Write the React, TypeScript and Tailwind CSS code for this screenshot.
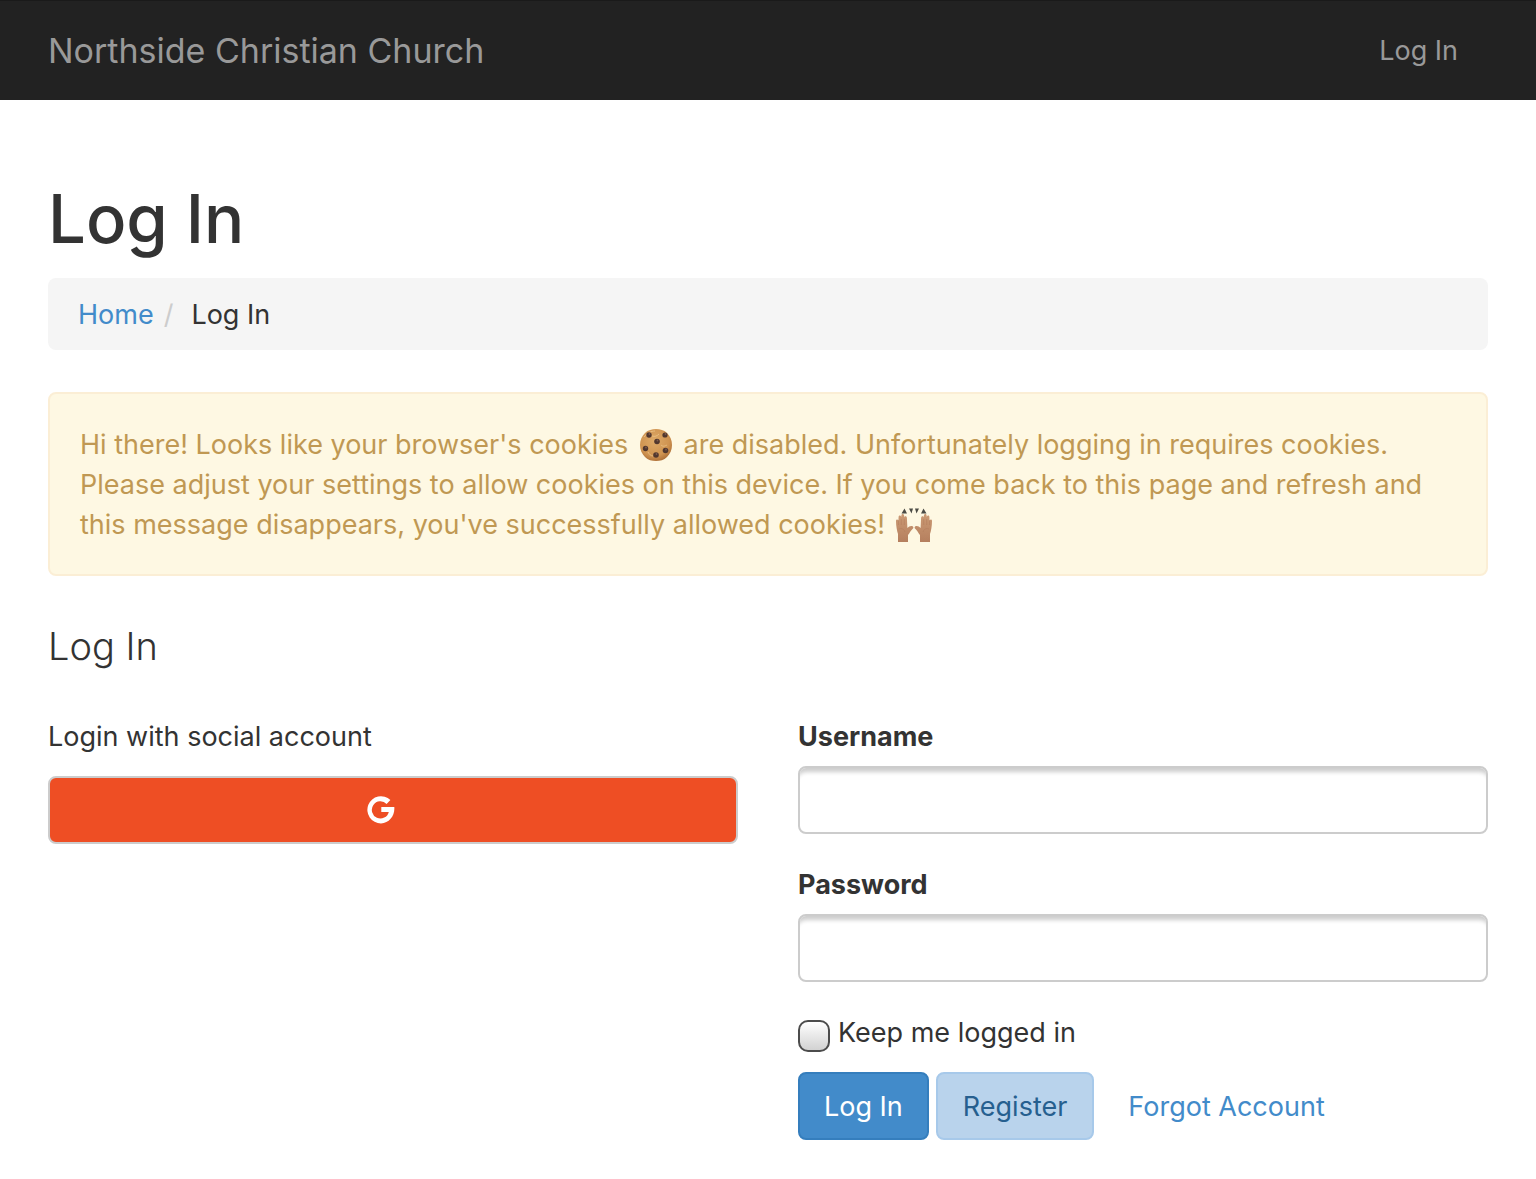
import { useState } from "react";

const CookieIcon = () => (
  <svg viewBox="0 0 34 34" className="inline-block size-[34px] align-[-8px] mx-[3px]" role="img" aria-label="cookie">
    <defs>
      <radialGradient id="dough" cx="45%" cy="38%" r="62%">
        <stop offset="0" stopColor="#deaa68" />
        <stop offset="0.75" stopColor="#cf9350" />
        <stop offset="1" stopColor="#b1733a" />
      </radialGradient>
    </defs>
    <path
      d="M17 1c4 0 8 1 11 4 3 3 5 7 5 12 0 5-2 9-5 12-3 3-7 4-11 4s-8-1-11-4c-3-3-5-7-5-12 0-5 2-9 5-12 3-3 7-4 11-4z"
      fill="url(#dough)"
    />
    <path d="M5 9c3-4 7-6 11-6M13 8c3 1 5 0 7-2M9 24c1 2 3 4 5 4M22 17c2 2 4 1 6 0" stroke="#e9bd80" strokeWidth="1" fill="none" />
    <g fill="#51372e">
      <circle cx="10" cy="7" r="2.7" />
      <circle cx="26" cy="7" r="2.6" />
      <circle cx="18" cy="13.5" r="2.8" />
      <circle cx="6.5" cy="20.5" r="2.7" />
      <circle cx="26.5" cy="22.5" r="2.8" />
      <circle cx="17" cy="27" r="2.8" />
    </g>
    <g fill="#7d5a4c">
      <circle cx="10.5" cy="6" r="0.9" />
      <circle cx="26.5" cy="6" r="0.9" />
      <circle cx="18.5" cy="12.5" r="0.9" />
      <circle cx="7" cy="19.5" r="0.9" />
      <circle cx="27" cy="21.5" r="0.9" />
      <circle cx="17.5" cy="26" r="0.9" />
    </g>
  </svg>
);

const HandsIcon = () => (
  <svg viewBox="0 0 36 36" className="ml-[3px] inline-block size-9 align-[-9px]" role="img" aria-label="raising hands">
    <defs>
      <linearGradient id="skin" x1="0" y1="0" x2="0" y2="1">
        <stop offset="0" stopColor="#cb9a74" />
        <stop offset="1" stopColor="#b57f5e" />
      </linearGradient>
      <g id="hand">
        <path
          d="M2 35V27C1 24 0 19 0 14c0-2 2-2 2.4 0L2.6 10c0-2 2.3-2 2.6 0l.2-1.500c0-2 2.500-2 2.700 0l.3 2c.2-2 2.500-1.500 2.500.5l.5 10c1.500-2 4-2.500 5.500-1.600 1 .8.4 1.900-.4 2.600-2 1.600-3 4.500-4.500 6V35z"
          fill="url(#skin)"
        />
        <path d="M2.5 13v5M5.3 12v6M8.3 12v6M3 22c3-1 5 0 6 3" stroke="#b07b5a" strokeWidth="0.5" fill="none" />
      </g>
    </defs>
    <use href="#hand" />
    <use href="#hand" transform="matrix(-1 0 0 1 36 0)" />
    <g fill="#4b4b45">
      <path d="M5.5 6.500L8.500 1.500 11 6.500zM13 1.500h4L15.500 6.500zM19 1.500H23l-2.500 5zM25 6.500L27.500 1.500 30.500 6.500z" />
    </g>
  </svg>
);

const GoogleIcon = () => (
  <svg viewBox="0 0 28 28" className="size-7" aria-hidden="true">
    <path
      d="M14.3 11H27.3C28.1 19.5 22.3 27.4 14 27.4A13.6 13.6 0 1 1 23.4 4L19.6 7.9A8.6 8.6 0 1 0 21.8 15.9H14.3z"
      fill="#fff"
    />
  </svg>
);

const inputClass =
  "block w-full h-[68px] px-6 rounded-lg border-2 border-[#cccccc] bg-white shadow-[inset_0_8px_4px_-4px_rgba(0,0,0,0.2)] focus:outline-none focus:border-[#66afe9]";

const App: React.FC = () => {
  const [form, setForm] = useState({ username: "", password: "", remember: false });

  const handleChange = (e: React.ChangeEvent<HTMLInputElement>) => {
    const { name, type, value, checked } = e.target;
    setForm((prev) => ({ ...prev, [name]: type === "checkbox" ? checked : value }));
  };

  return (
    <div className="min-h-screen bg-white font-['Inter',sans-serif] text-[27px] leading-10 text-[#333333]">
      <nav className="flex items-center justify-between h-[100px] pl-12 pr-[78px] bg-[#222222] border-t border-[#1a1a1a] text-[#999999]">
        <a href="#inicio" className="text-[34px]">
          Northside Christian Church
        </a>
        <a href="#login">Log In</a>
      </nav>

      <main className="px-12 pt-[79px] pb-9">
        <h1 className="text-[67px] leading-20 font-medium">Log In</h1>

        <nav aria-label="Breadcrumb" className="mt-[19px] flex h-[72px] items-center rounded-lg bg-[#f5f5f5] px-[30px] pt-[2px]">
          <a href="#home" className="text-[#428bca]">
            Home
          </a>
          <span className="pl-[10px] pr-[18px] text-[#cccccc]">/</span>
          <span>Log In</span>
        </nav>

        <div className="mt-[42px] rounded-lg border-2 border-[#fbeed5] bg-[#fef8e3] px-[30px] pt-[31px] pb-[29px] text-[#c09853]" role="alert">
          Hi there! Looks like your browser's cookies <CookieIcon /> are disabled. Unfortunately logging in requires cookies.
          Please adjust your settings to allow cookies on this device. If you come back to this page and refresh and this
          message disappears, you've successfully allowed cookies! <HandsIcon />
        </div>

        <h2 className="mt-[46px] text-[38px] leading-12 font-light">Log In</h2>

        <div className="mt-[47px] grid grid-cols-2 gap-[60px]">
          <section>
            <p>Login with social account</p>
            <button
              type="button"
              aria-label="Google"
              className="mt-[19px] flex h-[68px] w-full items-center justify-center rounded-lg border-2 border-[#cccccc] bg-[#ee4e24] pr-6"
            >
              <GoogleIcon />
            </button>
          </section>

          <form onSubmit={(e) => e.preventDefault()}>
            <label htmlFor="username" className="block mb-[9px] font-bold">
              Username
            </label>
            <input id="username" name="username" type="text" value={form.username} onChange={handleChange} className={inputClass} />

            <label htmlFor="password" className="block mt-[31px] mb-[9px] font-bold">
              Password
            </label>
            <input
              id="password"
              name="password"
              type="password"
              value={form.password}
              onChange={handleChange}
              className={inputClass}
            />

            <div className="mt-[31px] flex items-start gap-2">
              <input
                id="remember"
                name="remember"
                type="checkbox"
                checked={form.remember}
                onChange={handleChange}
                className="mt-[7px] size-8 appearance-none rounded-[10px] border-2 border-[#4c4c4c] bg-linear-to-b from-white to-[#d2d2d2] checked:from-[#428bca] checked:to-[#428bca]"
              />
              <label htmlFor="remember">Keep me logged in</label>
            </div>

            <div className="mt-[19px] flex items-center">
              <button type="submit" className="h-[68px] rounded-lg border-2 border-[#357ebd] bg-[#428bca] px-6 pt-[2px] text-white">
                Log In
              </button>
              <button
                type="button"
                className="ml-[7px] h-[68px] rounded-lg border-2 border-[#a7c9ea] bg-[#b9d3ec] px-[25px] pt-[2px] text-[#265f8f]"
              >
                Register
              </button>
              <a href="#forgot" className="ml-[34px] pt-[2px] text-[#428bca]">
                Forgot Account
              </a>
            </div>
          </form>
        </div>
      </main>
    </div>
  );
};

export default App;
